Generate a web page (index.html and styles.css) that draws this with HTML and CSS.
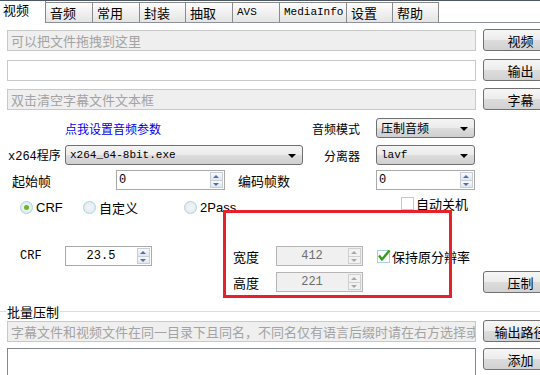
FILE: index.html
```html
<!DOCTYPE html>
<html lang="zh-CN">
<head>
    <meta charset="UTF-8">
    <title>小丸工具箱</title>
    <link rel="stylesheet" href="styles.css">
</head>
<body>
<div class="app">
    <div class="tabs">
        <div class="tab active" style="width:46px">视频</div>
        <div class="tab" style="width:47px">音频</div>
        <div class="tab" style="width:47px">常用</div>
        <div class="tab" style="width:46px">封装</div>
        <div class="tab" style="width:47px">抽取</div>
        <div class="tab mono" style="width:47px">AVS</div>
        <div class="tab mono" style="width:67px">MediaInfo</div>
        <div class="tab" style="width:46px">设置</div>
        <div class="tab" style="width:46px">帮助</div>
    </div>

    <div class="page">
        <div class="row row-file">
            <div class="field ro">可以把文件拖拽到这里</div>
            <button class="btn">视频</button>
        </div>
        <div class="row row-out">
            <div class="field"></div>
            <button class="btn">输出</button>
        </div>
        <div class="row row-sub">
            <div class="field ro">双击清空字幕文件文本框</div>
            <button class="btn">字幕</button>
        </div>

        <!-- 参数区 -->
        <div class="row row-a">
            <a class="link">点我设置音频参数</a>
            <span class="lbl lbl-audio">音频模式</span>
            <div class="combo combo-sm">压制音频</div>
        </div>
        <div class="row row-b">
            <span class="lbl lbl-x264">x264程序</span>
            <div class="combo combo-lg mono">x264_64-8bit.exe</div>
            <span class="lbl lbl-split">分离器</span>
            <div class="combo combo-sm mono">lavf</div>
        </div>
        <div class="row row-c">
            <span class="lbl lbl-start">起始帧</span>
            <div class="spin spin-start"><span class="val">0</span><div class="arrows"><i class="up"></i><i class="down"></i></div></div>
            <span class="lbl lbl-count">编码帧数</span>
            <div class="spin spin-count"><span class="val">0</span><div class="arrows"><i class="up"></i><i class="down"></i></div></div>
        </div>
        <div class="row row-d">
            <label class="opt opt-crf"><span class="radio on"></span>CRF</label>
            <label class="opt opt-custom"><span class="radio"></span>自定义</label>
            <label class="opt opt-2pass"><span class="radio"></span>2Pass</label>
            <label class="opt opt-off"><span class="check"></span>自动关机</label>
        </div>
        <div class="row row-e">
            <span class="lbl lbl-crf">CRF</span>
            <div class="spin spin-crf"><span class="val center">23.5</span><div class="arrows"><i class="up"></i><i class="down"></i></div></div>
            <span class="lbl lbl-w">宽度</span>
            <div class="spin spin-wh off"><span class="val center">412</span><div class="arrows"><i class="up"></i><i class="down"></i></div></div>
            <label class="opt opt-keep"><span class="check checked"><svg width="14" height="13" viewBox="0 0 14 13"><path d="M2 6.5 L5 10.5 L12.5 1.5" fill="none" stroke="#2f9e1a" stroke-width="2.4" stroke-linejoin="round"/></svg></span>保持原分辨率</label>
        </div>
        <div class="row row-f">
            <span class="lbl lbl-h">高度</span>
            <div class="spin spin-wh off"><span class="val center">221</span><div class="arrows"><i class="up"></i><i class="down"></i></div></div>
            <button class="btn btn-go">压制</button>
        </div>

        <div class="group">
            <span class="group-title">批量压制</span>
        </div>
        <div class="row row-g">
            <div class="field ro">字幕文件和视频文件在同一目录下且同名，不同名仅有语言后缀时请在右方选择或输入</div>
            <button class="btn">输出路径</button>
        </div>
        <div class="row row-h">
            <div class="list"></div>
            <button class="btn">添加</button>
        </div>
    </div>

    <div class="mark"></div>
</div>
</body>
</html>
```

FILE: styles.css
```css
html, body {
    margin: 0;
    padding: 0;
    background: #fff;
}

.app {
    position: relative;
    width: 540px;
    height: 375px;
    overflow: hidden;
    font-family: "Noto Sans CJK SC", "Liberation Sans", sans-serif;
    font-size: 12px;
    color: #000;
}

.mono {
    font-family: "Liberation Mono", "Noto Sans CJK SC", monospace;
    font-size: 11px;
}

/* 标签页 */
.tabs {
    display: flex;
    height: 21px;
    border-top: 1px solid #4c5868;
    border-bottom: 1px solid #8d9199;
}

.tab {
    box-sizing: border-box;
    flex: none;
    height: 20px;
    margin-top: 1px;
    padding-left: 4px;
    line-height: 19px;
    border: 1px solid #8a8a8a;
    border-bottom: none;
    border-left: none;
    background: linear-gradient(#fdfdfd, #e4e4e4);
    white-space: nowrap;
    font-size: 13px;
}

.tab.mono {
    font-size: 11px;
}

.tab.active {
    height: 22px;
    margin-top: 0;
    padding-left: 3px;
    line-height: 18px;
    background: #fff;
    border-right: 1px solid #8a8a8a;
    border-top: none;
    position: relative;
    z-index: 1;
}

/* 内容 */
.page {
    padding-left: 7px;
}

.row {
    display: flex;
    align-items: center;
}

.row-file { margin-top: 6px; height: 22px; }
.row-out { margin-top: 8px; height: 22px; }
.row-sub { margin-top: 7px; height: 22px; }
.row-a { margin-top: 8px; height: 20px; }
.row-b { margin-top: 7px; height: 20px; }
.row-c { margin-top: 5px; height: 20px; }
.row-d { margin-top: 9px; height: 17px; }
.row-e { margin-top: 30px; height: 20px; }
.row-f { margin-top: 5px; height: 22px; }
.row-g { margin-top: 1px; height: 22px; }
.row-h { margin-top: 6px; height: 26px; align-items: flex-start; }

.field {
    box-sizing: border-box;
    flex: none;
    width: 469px;
    height: 21px;
    border: 1px solid #c9c9c9;
    background: #fff;
    color: #a3a3a3;
    padding-left: 3px;
    line-height: 19px;
    white-space: nowrap;
    overflow: hidden;
    font-size: 13px;
}

.field.ro {
    background: #efefef;
}

.btn {
    box-sizing: border-box;
    width: 75px;
    height: 22px;
    margin-left: 7px;
    flex: none;
    padding: 0;
    border: 1px solid #707070;
    border-radius: 3px;
    background: linear-gradient(#f6f6f6 0%, #ececec 50%, #dcdcdc 51%, #d2d2d2 100%);
    font-family: inherit;
    font-size: 13px;
    color: #000;
    text-align: center;
    white-space: nowrap;
}

.lbl {
    flex: none;
    white-space: nowrap;
}

.link {
    color: #0000ee;
    margin-left: 58px;
    width: 96px;
    flex: none;
}

.lbl-audio { width: 199px; text-align: right; }
.lbl-x264 { margin-left: 1px; width: 57px; font-family: "Liberation Mono", "Noto Sans CJK SC", monospace; font-size: 12px; }
.lbl-split { width: 57px; text-align: right; }
.lbl-start { margin-left: 5px; width: 104px; font-size: 13px; }
.lbl-count { margin-left: 13px; width: 138px; font-size: 13px; }
.lbl-crf { margin-left: 13px; width: 45px; font-family: "Liberation Mono", monospace; font-size: 12px; }
.lbl-w { margin-left: 81px; width: 43px; font-size: 13px; }
.lbl-h { margin-left: 226px; width: 43px; font-size: 13px; }

/* 下拉框 */
.combo {
    position: relative;
    box-sizing: border-box;
    height: 20px;
    flex: none;
    padding-left: 4px;
    line-height: 18px;
    border: 1px solid #707070;
    border-radius: 3px;
    background: linear-gradient(#f4f4f4 0%, #ebebeb 50%, #dddddd 51%, #cfcfcf 100%);
    white-space: nowrap;
}

.combo::after {
    content: "";
    position: absolute;
    right: 6px;
    top: 8px;
    border-left: 4px solid transparent;
    border-right: 4px solid transparent;
    border-top: 4px solid #000;
}

.combo-sm { width: 99px; margin-left: 16px; }
.combo-lg { width: 238px; }
.combo.mono { font-size: 11px; }

/* 数字框 */
.spin {
    box-sizing: border-box;
    display: flex;
    height: 20px;
    flex: none;
    border: 1px solid #a9a9a9;
    background: #fff;
}

.spin-start { width: 109px; }
.spin-count { width: 99px; }
.spin-crf { width: 87px; }
.spin-wh { width: 87px; }

.spin .val {
    flex: 1;
    padding-left: 2px;
    line-height: 18px;
    font-family: "Liberation Mono", monospace;
    font-size: 12px;
}

.spin .val.center {
    text-align: center;
    padding-left: 0;
}

.spin.off {
    background: #f0f0f0;
    border-color: #b5b5b5;
}

.spin.off .val {
    color: #6d6d6d;
}

.arrows {
    display: flex;
    flex-direction: column;
    width: 13px;
    margin: 1px;
}

.arrows i {
    position: relative;
    flex: 1;
    border: 1px solid #c6cdd6;
    background: linear-gradient(#f7f9fb, #e1e7ee);
}

.arrows i + i {
    border-top: none;
}

.arrows i::after {
    content: "";
    position: absolute;
    left: 2px;
    border-left: 3px solid transparent;
    border-right: 3px solid transparent;
}

.arrows .up::after {
    top: 2px;
    border-bottom: 3px solid #4e6fb0;
}

.arrows .down::after {
    top: 2px;
    border-top: 3px solid #4e6fb0;
}

.spin.off .arrows i {
    border-color: #cfcfcf;
    background: #f2f2f2;
}

.spin.off .arrows .up::after { border-bottom-color: #a8a8a8; }
.spin.off .arrows .down::after { border-top-color: #a8a8a8; }

/* 单选、复选 */
.opt {
    display: flex;
    align-items: center;
    flex: none;
    white-space: nowrap;
    font-size: 13px;
}

.opt-crf { margin-left: 13px; width: 63px; font-family: "Liberation Sans", sans-serif; }
.opt-custom { width: 101px; }
.opt-2pass { width: 217px; font-family: "Liberation Sans", sans-serif; }
.opt-off { margin-top: -8px; }
.opt-keep { margin-left: 14px; }

.radio {
    box-sizing: border-box;
    width: 13px;
    height: 13px;
    margin-right: 3px;
    border: 1px solid #a8d2e4;
    border-radius: 50%;
    background: radial-gradient(#f4f4f4, #dfe9ee);
    position: relative;
}

.radio.on::after {
    content: "";
    position: absolute;
    left: 3px;
    top: 3px;
    width: 5px;
    height: 5px;
    border-radius: 50%;
    background: #6ab72d;
}

.check {
    box-sizing: border-box;
    width: 13px;
    height: 13px;
    margin-right: 2px;
    border: 1px solid #a8d2e4;
    background: #fff;
    position: relative;
}

.check svg {
    position: absolute;
    left: -1px;
    top: -2px;
}

/* 分组框 */
.group {
    display: flex;
    align-items: center;
    margin: 10px 0 0 -7px;
    height: 16px;
}

.group::before {
    content: "";
    width: 6px;
    border-top: 1px solid #d5dfe5;
}

.group::after {
    content: "";
    flex: 1;
    border-top: 1px solid #d5dfe5;
}

.group-title {
    padding: 0 1px;
    font-size: 13px;
}

.list {
    box-sizing: border-box;
    flex: none;
    width: 469px;
    height: 40px;
    border: 1px solid #828790;
    background: #fff;
}

.btn-go {
    margin-left: 120px;
}

/* 标注框 */
.mark {
    position: absolute;
    left: 223px;
    top: 210px;
    width: 223px;
    height: 82px;
    border: 3px solid #e8202c;
    pointer-events: none;
}
```
